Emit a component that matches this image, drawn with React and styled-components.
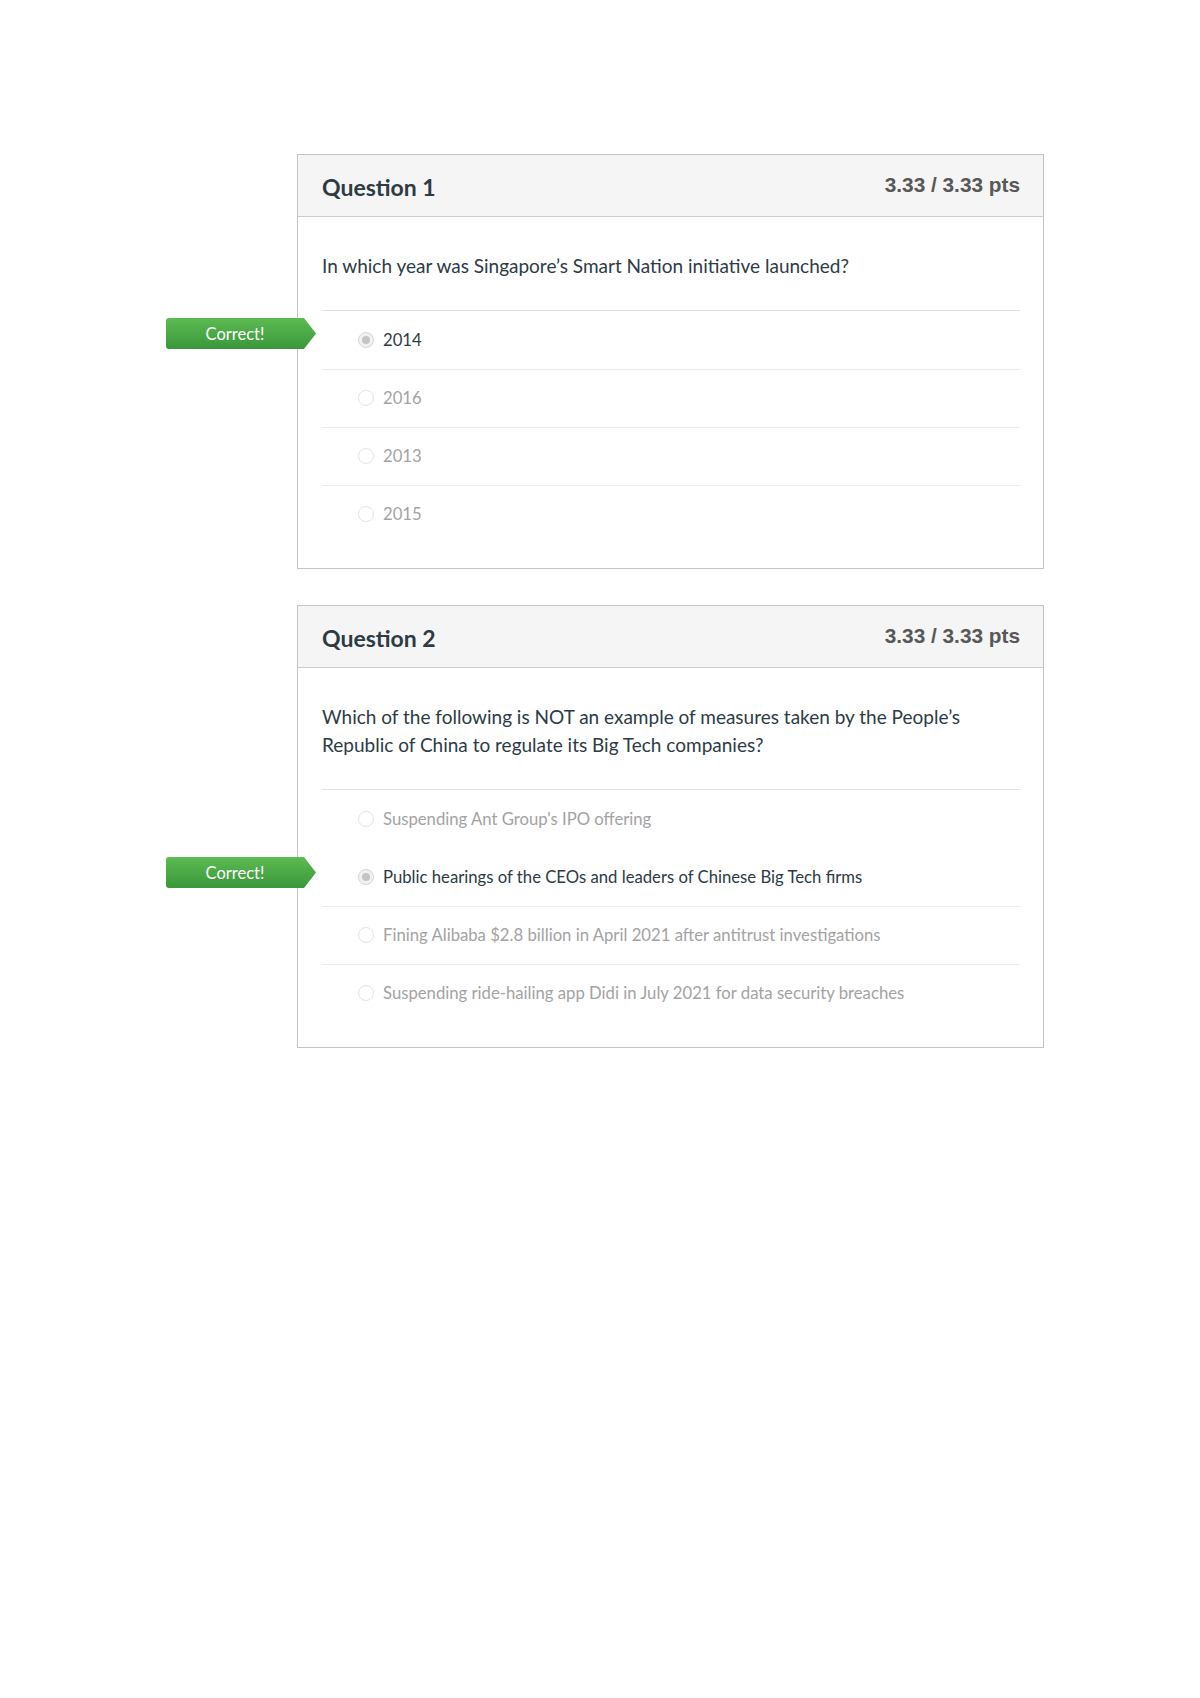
import React from "react";
import styled, { createGlobalStyle } from "styled-components";

const GlobalStyle = createGlobalStyle`
  html, body {
    margin: 0;
    padding: 0;
    background: #fff;
  }
  body {
    font-family: Lato, "Open Sans", "Liberation Sans", sans-serif;
    color: #2d3b45;
  }
`;

const Page = styled.div`
  width: 1200px;
  min-height: 1698px;
  box-sizing: border-box;
  padding: 154px 0 0 297px;
  display: flex;
  flex-direction: column;
  gap: 36px;
`;

const Card = styled.section`
  width: 747px;
  box-sizing: border-box;
  border: 1px solid #c4c4c4;
  background: #fff;
`;

const Header = styled.header`
  height: 62px;
  box-sizing: border-box;
  padding: 18px 23px 0 24px;
  display: flex;
  justify-content: space-between;
  align-items: flex-start;
  background: #f5f5f5;
  border-bottom: 1px solid #c7cdd1;
`;

const Title = styled.h2`
  margin: 0;
  font-family: Lato, sans-serif;
  font-size: 23px;
  font-weight: 700;
  color: #2d3b45;
`;

const Points = styled.div`
  font-family: "Liberation Sans", Arial, sans-serif;
  font-size: 20.8px;
  font-weight: 700;
  color: #585858;
`;

const Body = styled.div`
  padding: 35px 23px 25px 24px;
`;

const Prompt = styled.p`
  margin: 0;
  padding-bottom: 30px;
  font-size: 19px;
  line-height: 28px;
  color: #2d3b45;
  border-bottom: 1px solid #e2e2e2;
`;

const Answers = styled.ul`
  list-style: none;
  margin: 0;
  padding: 0;
`;

const Answer = styled.li`
  position: relative;
  height: 58px;
  box-sizing: border-box;
  padding: 0 0 2px 36px;
  display: flex;
  align-items: center;
  gap: 9px;
  border-top: 1px solid ${(p) => (p.$divider ? "#ececec" : "transparent")};
  font-size: 16.7px;
  color: ${(p) => (p.$selected ? "#2d3b45" : "#a3a3a3")};
`;

const Radio = styled.span`
  width: 16px;
  height: 16px;
  box-sizing: border-box;
  border-radius: 50%;
  border: 1px solid ${(p) => (p.$checked ? "#d6d6d6" : "#e4e4e4")};
  background: ${(p) => (p.$checked ? "#f1f1f1" : "#fff")};
  display: flex;
  align-items: center;
  justify-content: center;
  flex-shrink: 0;

  &::after {
    content: "";
    display: ${(p) => (p.$checked ? "block" : "none")};
    width: 8px;
    height: 8px;
    border-radius: 50%;
    background: #c4c4c4;
  }
`;

const CorrectTag = styled.div`
  position: absolute;
  left: -156px;
  top: ${(p) => p.$top}px;
  width: 150px;
  height: 31px;
  box-sizing: border-box;
  padding-right: 12px;
  display: flex;
  align-items: center;
  justify-content: center;
  background: linear-gradient(#5cbb52, #3a973a);
  border-radius: 3px 0 0 3px;
  clip-path: polygon(0 0, 138px 0, 100% 50%, 138px 100%, 0 100%);
  color: #fff;
  font-size: 16.5px;
  font-weight: 400;
`;

const questions = [
  {
    title: "Question 1",
    points: "3.33 / 3.33 pts",
    prompt: "In which year was Singapore\u2019s Smart Nation initiative launched?",
    answers: ["2014", "2016", "2013", "2015"],
    correct: 0,
  },
  {
    title: "Question 2",
    points: "3.33 / 3.33 pts",
    prompt:
      "Which of the following is NOT an example of measures taken by the People\u2019s Republic of China to regulate its Big Tech companies?",
    answers: [
      "Suspending Ant Group's IPO offering",
      "Public hearings of the CEOs and leaders of Chinese Big Tech firms",
      "Fining Alibaba $2.8 billion in April 2021 after antitrust investigations",
      "Suspending ride-hailing app Didi in July 2021 for data security breaches",
    ],
    correct: 1,
  },
];

const Question = ({ q }) => (
  <Card>
    <Header>
      <Title>{q.title}</Title>
      <Points>{q.points}</Points>
    </Header>
    <Body>
      <Prompt>{q.prompt}</Prompt>
      <Answers>
        {q.answers.map((a, i) => {
          const selected = i === q.correct;
          return (
            <Answer key={a} $selected={selected} $divider={i > 0 && !selected}>
              {selected && <CorrectTag $top={i === 0 ? 6 : 8}>Correct!</CorrectTag>}
              <Radio $checked={selected} />
              <span>{a}</span>
            </Answer>
          );
        })}
      </Answers>
    </Body>
  </Card>
);

export default function App() {
  return (
    <>
      <GlobalStyle />
      <Page>
        {questions.map((q) => (
          <Question key={q.title} q={q} />
        ))}
      </Page>
    </>
  );
}
